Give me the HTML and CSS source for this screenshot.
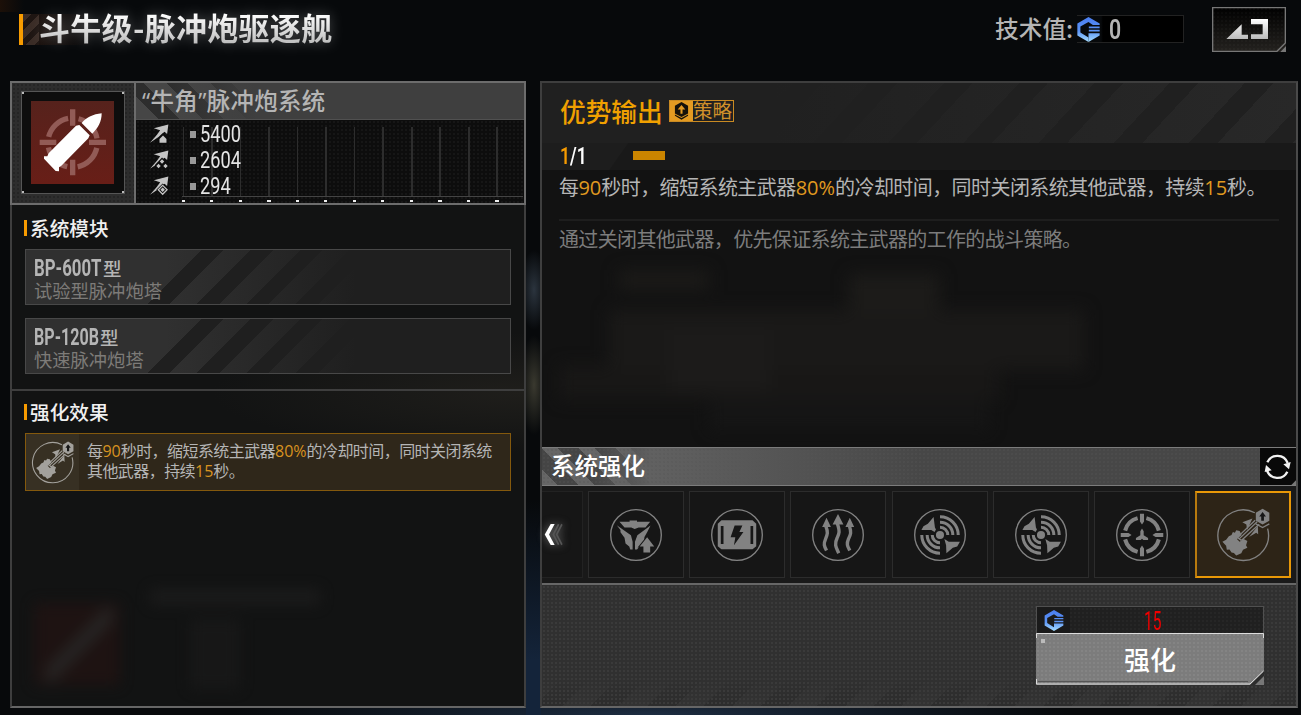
FILE: index.html
```
<!DOCTYPE html>
<html lang="zh-CN">
<head>
  <meta charset="UTF-8" />
  <meta name="viewport" content="width=device-width, initial-scale=1" />
  <title>斗牛级-脉冲炮驱逐舰</title>
  <link rel="stylesheet" href="styles.css">
</head>
<body>
  <!-- Shared icons -->
  <svg class="defs" aria-hidden="true">
    <defs>
      <linearGradient id="blue" x1="0" y1="0" x2="0" y2="74" gradientUnits="userSpaceOnUse">
        <stop offset="0" stop-color="#4a7df0" />
        <stop offset="0.55" stop-color="#5b93f4" />
        <stop offset="1" stop-color="#a5dcff" />
      </linearGradient>
      <linearGradient id="silver" x1="0" y1="0" x2="0" y2="1">
        <stop offset="0" stop-color="#fff" />
        <stop offset="1" stop-color="#bbb" />
      </linearGradient>
      <symbol id="tech" viewBox="0 0 66 74">
        <path fill="url(#blue)" d="M33 0 L66 19 V24 H46 L33 15 L9 28 V46 L33 61 V74 L0 55 V19Z" />
        <path fill="url(#blue)" d="M34 28 H66 V33 H34Z M34 38 H66 V43 H34Z M33 48 H66 V55 L33 74Z" />
      </symbol>
      <symbol id="radar" viewBox="-80 -80 160 160">
        <circle class="ring" r="75" />
        <circle r="12" />
        <path class="arc" d="M0-54A54 54 0 0 1 54 0M0-38A38 38 0 0 1 38 0M0-23A23 23 0 0 1 23 0M0 54A54 54 0 0 1-54 0M0 38A38 38 0 0 1-38 0M0 23A23 23 0 0 1-23 0" />
        <path d="M-19-53 L-15-22 -12-16 -16-9 -26-15 H-55 L-49-26 -36-33Z M13 12 L26 20 H59 L51 34 38 38 19 54 18 30Z" />
      </symbol>
      <symbol id="cannon" viewBox="-80 -80 160 160">
        <path class="ring" d="M35-66A75 75 0 1 0 73-19" />
        <path d="M-61 20 L-50 14 -42 4 -34 0 -30-9 -24-7 -20-14 -10-12 -4 0 -18 12 -10 20 2 12 13 18 9 30 13 38 0 44 -5 54 -20 61 -27 53 -34 52 -40 43 -48 44 -50 32Z" />
        <path class="thin" d="M-17 7 L36-44 M-5 16 L48-32 M-17 7 L-5 16 M-10 10 L42-39" />
        <path d="M-2-38 L28-49 12-15 10-31Z M44-27 L45-2 39-7 18 6Z" />
        <path d="M58-78 L78-66 V-42 L58-31 38-42 V-66Z" />
        <path class="hole" d="M58-68 L68-55 H62 V-42 H54 V-55 H48Z" />
        <path class="thin" d="M38-33 L58-22 78-33" />
      </symbol>
    </defs>
  </svg>

  <header class="topbar">
    <h1 class="title"><span>斗牛级-脉冲炮驱逐舰</span></h1>
    <div class="tech">
      <span class="tech-label">技术值:</span>
      <div class="tech-box">
        <svg class="tech-icon"><use href="#tech" /></svg>
        <span class="narrow tech-value">0</span>
      </div>
    </div>
    <button class="back" aria-label="返回">
      <svg viewBox="0 0 222 135">
        <path class="frame" d="M2 2 H220 V108 L195 133 H2Z" />
        <path class="corner" d="M222 117 V135 H205Z" />
        <path fill="url(#silver)" d="M43 96 L89 52 V83 H108 V96Z M117 36 H168 V96 H117 V82 H152 V52 H117Z" />
      </svg>
    </button>
  </header>

  <main class="panels">
    <section class="panel left">
      <div class="system">
        <div class="system-icon">
          <div class="system-frame">
            <svg viewBox="0 0 249 249">
              <g class="sight">
                <circle cx="125" cy="125" r="74" stroke-dasharray="84 32.24" stroke-dashoffset="-16" />
                <path d="M125 25 V74 M125 176 V223 M26 124 H76 M174 124 H225" />
              </g>
              <path fill="#fff" d="M212 37 C212 62 202 80 184 98 L152 66 C168 48 186 40 212 37Z M145 72 L176 103 L172 112 L91 194 L84 199 V211 L74 210 L39 173 V166 H49 L53 157 L135 74Z" />
            </svg>
          </div>
        </div>
        <div class="system-info">
          <h2 class="system-name">“牛角”脉冲炮系统</h2>
          <div class="stats">
            <div class="stat">
              <svg viewBox="0 0 60 60"><path d="M58 0 L54 30 46 23 38 29 28 39 0 58 22 32 32 18 12 12Z" /><path class="cut" d="M24 60 V45 L41 28 58 45 V60Z" /><path d="M30 46 L41 35 52 46 V58 H30Z" /></svg>
              <i></i><span class="narrow">5400</span>
            </div>
            <div class="stat">
              <svg viewBox="0 0 60 60"><path d="M58 0 L54 30 46 23 38 29 28 39 0 58 22 32 32 18 12 12Z" /><path class="cut" d="M16 60 V45 L38 22 60 45 V60Z" /><path d="M38 28 l7 7 -7 7 -7-7z M27 42 l7 7 -7 7 -7-7z M49 42 l7 7 -7 7 -7-7z" /></svg>
              <i></i><span class="narrow">2604</span>
            </div>
            <div class="stat">
              <svg viewBox="0 0 60 60"><path d="M58 0 L54 30 46 23 38 29 28 39 0 58 22 32 32 18 12 12Z" /><path class="cut" d="M40 22 L60 42 40 62 20 42Z" /><path class="diamond" d="M40 28 L54 42 40 56 26 42Z" /><path d="M40 35 l7 7 -7 7 -7-7z" /></svg>
              <i></i><span class="narrow">294</span>
            </div>
          </div>
        </div>
      </div>

      <div class="block modules">
        <h3>系统模块</h3>
        <div class="module">
          <p class="module-name"><span class="narrow">BP-600T</span>型</p>
          <p class="module-type">试验型脉冲炮塔</p>
        </div>
        <div class="module">
          <p class="module-name m120"><span class="narrow">BP-120B</span>型</p>
          <p class="module-type">快速脉冲炮塔</p>
        </div>
      </div>

      <div class="block effects">
        <h3>强化效果</h3>
        <div class="effect">
          <div class="effect-icon"><svg><use href="#cannon" /></svg></div>
          <p>每<em>90</em>秒时，缩短系统主武器<em>80%</em>的冷却时间，同时关闭系统<br>其他武器，持续<em>15</em>秒。</p>
        </div>
      </div>
      <div class="ghost" aria-hidden="true"></div>
    </section>

    <section class="panel right">
      <div class="detail-head">
        <h2>优势输出</h2>
        <div class="tag">
          <svg viewBox="0 0 40 52"><path d="M20 0 L39 11 V33 L20 43 1 33 V11Z M1 36 L20 46 39 36 V40 L20 51 1 40Z" /><path class="tag-arrow" d="M20 9 L31 22 H23 V34 H17 V22 H9Z" /></svg>
          <span>策略</span>
        </div>
      </div>
      <div class="level">
        <span class="narrow"><b>1</b>/1</span>
        <div class="level-bar"></div>
      </div>
      <div class="detail">
        <p class="detail-text">每<em>90</em>秒时，缩短系统主武器<em>80%</em>的冷却时间，同时关闭系统其他武器，持续<em>15</em>秒。</p>
        <p class="detail-note">通过关闭其他武器，优先保证系统主武器的工作的战斗策略。</p>
        <div class="ship" aria-hidden="true"></div>
      </div>

      <div class="boost-head">
        <h2>系统强化</h2>
        <button class="refresh" aria-label="刷新">
          <svg viewBox="0 0 108 108">
            <path class="loop" d="M22 40 A33 33 0 0 1 83 42 M82 68 A33 33 0 0 1 21 64" />
            <path d="M70 46 L92 39 87 61Z M14 69 L18 48 35 64Z" />
            <path class="corner" d="M108 94 V108 H94Z" />
          </svg>
        </button>
      </div>

      <div class="slots">
        <div class="slot first">
          <svg viewBox="0 0 72 130"><path class="fade" d="M50 34 L34 65 50 96 M60 34 L44 65 60 96" /><path d="M26 33 H38 L21 65 38 97 H26 L8 65Z" /></svg>
        </div>
        <div class="slot">
          <svg viewBox="-80 -80 160 160">
            <circle class="ring" r="75" />
            <path d="M-49-39 H-19 V-43 H3 V-39 H42 L28-22 H8 L-4-18 -14-22 H-34Z M-57-29 L-15 1 -10 20 V43 H-17 L-20 34 -31 25 -34 8 -46-8 V-15Z M43-28 L4 1 -3 20 V43 H3 L15 28 24 18 25 6 33-8Z" />
            <path class="outlined" d="M33 7 L54 34 H42 V52 H22 V34 H11Z" />
          </svg>
        </div>
        <div class="slot">
          <svg viewBox="-80 -80 160 160">
            <circle class="ring" r="75" />
            <path d="M-46-44 H46 L57-33 V33 L46 42 H-46 L-57 33 V-33Z" />
            <path class="hole" d="M-48-27 H-40 V27 H-48Z M40-27 H48 V27 H40Z M-7-28 H16 L7-9 H19 L-9 30 -5 7 H-19Z" />
          </svg>
        </div>
        <div class="slot">
          <svg viewBox="-80 -80 160 160">
            <circle class="ring" r="75" />
            <path d="M0-62 L16-31 H-16Z M-34-51 L-21-24 H-47Z M35-51 L48-24 H22Z" />
            <path class="wave" d="M-2-34 C6-10 4-5-3 10 C-12 28-5 38 2 54 M-36-26 C-29-8-31-2-37 12 C-44 28-40 34-34 46 M34-26 C40-8 38-2 31 12 C24 28 29 34 35 46" />
          </svg>
        </div>
        <div class="slot"><svg><use href="#radar" /></svg></div>
        <div class="slot"><svg><use href="#radar" /></svg></div>
        <div class="slot">
          <svg viewBox="-80 -80 160 160">
            <circle class="ring" r="75" />
            <path class="segment" d="M13-50A52 52 0 0 1 50-13M50 13A52 52 0 0 1 13 50M-13 50A52 52 0 0 1-50 13M-50-13A52 52 0 0 1-13-50" />
            <path d="M-6-63 H6 V-40 L0-31 -6-40Z M-6 63 H6 V40 L0 31 -6 40Z M-63-6 V6 H-40 L-31 0 -40-6Z M63-6 V6 H40 L31 0 40-6Z" />
            <path d="M0-19 L5-11 V1 L18 9 V15 H4 L0 11 -4 15 H-18 V9 L-5 1 V-11Z" />
          </svg>
        </div>
        <div class="slot active"><svg><use href="#cannon" /></svg></div>
      </div>

      <div class="footer">
        <div class="upgrade">
          <div class="price">
            <svg><use href="#tech" /></svg>
            <span class="narrow">15</span>
          </div>
          <button class="upgrade-btn">
            <svg viewBox="0 0 228 52" aria-hidden="true">
              <path class="notch" d="M214 52 L228 38 V52Z" />
              <path class="edge" d="M0.5 5 V0.5 H227.5 V5 M0.5 46 V51 H214 L227.5 38" />
              <path class="dash" d="M2 48.5 H212" />
              <path class="corner" d="M228 43 V52 H219Z" />
              <path class="pin" d="M5 6 h4 v4 h-4z" />
            </svg>
            <span>强化</span>
          </button>
        </div>
      </div>
    </section>
  </main>
</body>
</html>
```
FILE: styles.css
```
* {
  box-sizing: border-box;
}

body {
  margin: 0;
  width: 1301px;
  height: 715px;
  overflow: hidden;
  background:
    radial-gradient(ellipse 14px 50px at 534px 385px, #3a392f, transparent),
    radial-gradient(ellipse 14px 40px at 534px 290px, #2b343e, transparent),
    linear-gradient(#0000 500px, #14243a 660px) 526px 0 / 15px 100% no-repeat,
    radial-gradient(ellipse 420px 30px at 650px 715px, #1d2d42, transparent),
    #07090b;
  color: #b5b5b5;
  font-family: "Open Sans", "Noto Sans CJK SC", sans-serif;
}

h1, h2, h3, p {
  margin: 0;
  font-weight: 500;
}

p {
  font-weight: 400;
}

h1, h2, h3, button, .tech-label {
  font-family: "Noto Sans CJK SC", sans-serif;
}

button {
  padding: 0;
  border: 0;
  background: none;
}

svg {
  display: block;
  fill: currentColor;
}

em {
  font-style: normal;
  letter-spacing: 0;
  color: #e09a20;
}

.defs {
  position: absolute;
  width: 0;
  height: 0;
}

/* Squeezed digits */
.narrow {
  display: inline-block;
  font-family: Roboto, sans-serif;
  transform: scaleX(0.76);
  transform-origin: left center;
}

/* Icon strokes */
.ring, .arc, .thin, .wave, .segment, .loop, .frame, .edge, .dash, .diamond, .fade {
  fill: none;
  stroke: currentColor;
}
.ring { stroke-width: 4; }
.arc { stroke-width: 9; }
.thin { stroke-width: 4; }
.wave { stroke-width: 10; }
.segment { stroke-width: 12; }
.hole { fill: #171717; }
.corner { fill: #777; }
.outlined {
  stroke: #161616;
  stroke-width: 6;
  paint-order: stroke;
}

/* Top bar */
.topbar {
  display: flex;
  align-items: flex-start;
  height: 81px;
  padding: 7px 15px 0 19px;
  background: linear-gradient(90deg, #1c1008, transparent) 0 0 / 24px 12px no-repeat;
}

.title {
  flex: 1;
  display: flex;
  align-items: center;
  height: 31px;
  margin-top: 7px;
  padding-left: 16px;
  border-left: 4px solid #f79b00;
  background:
    repeating-linear-gradient(135deg, #3a2c26 0 6px, #1e1512 6px 12px) 0 0 / 16px 100% no-repeat,
    linear-gradient(90deg, #1e120d, transparent) 0 0 / 70px 100% no-repeat;
  font-size: 31px;
  font-weight: 700;
  letter-spacing: 0.3px;
  line-height: 31px;
}
.title span {
  margin-top: -5px;
  background: linear-gradient(#fff 20%, #bbb 90%);
  background-clip: text;
  color: transparent;
  line-height: 44px;
  filter: drop-shadow(0 0 7px rgba(255, 255, 255, 0.3));
}

.tech {
  display: flex;
  align-items: center;
  height: 44px;
  margin-right: 28px;
}
.tech-label {
  width: 82px;
  margin-top: -3px;
  font-size: 23.7px;
  font-weight: 500;
  white-space: nowrap;
}
.tech-box {
  display: flex;
  align-items: center;
  width: 107px;
  height: 28px;
  border: 1px solid #222;
  border-left: 0;
  background: linear-gradient(90deg, #07090b 24px, #000 26px);
}
.tech-icon {
  width: 23px;
  height: 25px;
}
.tech-value {
  margin: 2px 0 0 9px;
  font-size: 28px;
  font-weight: 600;
  line-height: 28px;
}
.back {
  width: 74px;
  height: 45px;
  background:
    radial-gradient(#ffffff06 1px, transparent 1px) 0 0 / 4px 4px,
    linear-gradient(#000, #24221f);
}
.back svg {
  width: 74px;
  height: 45px;
}
.frame {
  stroke: #777;
  stroke-width: 4;
}

/* Panels */
.panels {
  display: flex;
  gap: 14px;
  height: 627px;
  padding: 0 3px 0 10px;
}
.panel {
  display: flex;
  flex-direction: column;
  border: 2px solid #3e3e3e;
  border-bottom-color: #666;
}

.left {
  width: 516px;
  background:
    radial-gradient(ellipse 310px 60px at 510px 310px, #1f1e1b, transparent),
    #121313;
}
.system {
  display: flex;
  height: 124px;
  margin: -2px -2px 0;
  border: 2px solid #6c6c6c;
}
.system-icon {
  display: flex;
  align-items: center;
  justify-content: center;
  width: 124px;
  border-right: 2px solid #6c6c6c;
  background:
    linear-gradient(#f79b00, #f79b00) 9px 53px / 3px 15px no-repeat,
    radial-gradient(#252525 1px, transparent 1.2px) 0 0 / 4px 4px,
    #2d2d2d;
}
.system-frame {
  width: 104px;
  height: 103px;
  margin: -1px 0 0 -1px;
  padding: 9px;
  border: 1px solid #555;
  background:
    linear-gradient(#bbb, #bbb) 0 0 / 2px 2px no-repeat,
    linear-gradient(#bbb, #bbb) 100% 0 / 2px 2px no-repeat,
    linear-gradient(#bbb, #bbb) 0 100% / 2px 2px no-repeat,
    linear-gradient(#bbb, #bbb) 100% 100% / 2px 2px no-repeat,
    #0d0d0d;
}
.system-frame svg {
  width: 83px;
  height: 83px;
  background: linear-gradient(#56221c, #681e17);
}
.sight {
  fill: none;
  stroke: #925b56;
  stroke-width: 16;
}
.system-info {
  flex: 1;
}
.system-name {
  height: 37px;
  padding-left: 6px;
  border-bottom: 1px solid #505050;
  background:
    linear-gradient(90deg, transparent 30px, #3f3f3f 120px),
    repeating-linear-gradient(45deg, #464646 0 16px, #2d2d2d 16px 31px);
  font-family: "Open Sans", "Noto Sans CJK SC", sans-serif;
  font-size: 23.4px;
  letter-spacing: 0.4px;
  line-height: 36px;
}
.stats {
  height: 83px;
  padding-top: 1px;
  background:
    repeating-linear-gradient(90deg, #eee 0 3px, transparent 3px 28.5px) 46px 80px / 343px 2px no-repeat,
    linear-gradient(#444, #444) 46px 76px / 341px 1px no-repeat,
    repeating-linear-gradient(90deg, #2d2d2d 0 1.5px, transparent 1.5px 28.5px) 47px 7px / 323px 69px no-repeat,
    radial-gradient(#161616 1px, transparent 1.2px) 0 0 / 4px 4px,
    #0d0d0d;
}
.stat {
  display: flex;
  align-items: center;
  height: 26px;
  padding-left: 14px;
  color: #e4e4e4;
  font-size: 24px;
  font-weight: 400;
  line-height: 26px;
}
.stat svg {
  width: 19px;
  height: 20px;
  color: #c4c4c4;
}
.cut { fill: #0c0c0c; }
.diamond { stroke-width: 4; }
.stat i {
  width: 6px;
  height: 7px;
  margin: 0 4px 0 21px;
  background: #999;
}

.block h3 {
  padding-left: 3px;
  border-left: 3px solid #f79b00;
  color: #f0f0f0;
  font-size: 19.7px;
  line-height: 16px;
}
.modules {
  height: 186px;
  padding: 15px 13px 0 12px;
  border-bottom: 2px solid #3e3e3e;
}
.module {
  height: 56px;
  margin: 13px 0 0 1px;
  padding: 5px 8px;
  border: 1px solid #484848;
  background:
    linear-gradient(90deg, transparent 140px, #1f1f1f 330px),
    linear-gradient(135deg, #303030 124px, transparent 0),
    repeating-linear-gradient(135deg, #303030 0 19px, #1f1f1f 19px 35px);
}
.modules h3 {
  margin-bottom: 13px;
}
.module-name {
  height: 26px;
  font-size: 18.5px;
  font-weight: 500;
  line-height: 26px;
  white-space: nowrap;
}
.module-name .narrow {
  width: 69px;
  font-size: 24px;
  font-weight: 700;
  line-height: 26px;
  transform: scaleX(0.7);
}
.m120 .narrow {
  width: 66px;
  transform: scaleX(0.67);
}
.module-type {
  color: #7d7b78;
  font-size: 18.3px;
  line-height: 19px;
}

.effects {
  padding: 13px 13px 0 12px;
}
.effect {
  display: flex;
  height: 58px;
  margin: 13px 0 0 1px;
  border: 1px solid #84590d;
  background: #2f271a;
}
.effect-icon {
  display: flex;
  align-items: center;
  justify-content: center;
  width: 53px;
  background: #373023;
  color: #a3a19c;
}
.effect-icon svg {
  width: 43px;
  height: 43px;
}
.effect p {
  padding: 7px 0 0 8px;
  font-size: 16px;
  letter-spacing: -0.57px;
  line-height: 20px;
  white-space: nowrap;
}
.effect em {
  color: #d99320;
}

.ghost {
  width: 480px;
  height: 100px;
  margin: 98px 0 0 18px;
  background:
    linear-gradient(135deg, transparent 40%, #2c2a29 46% 54%, transparent 60%) 16px 18px / 66px 76px no-repeat,
    linear-gradient(#211312, #211312) 4px 14px / 86px 82px no-repeat,
    linear-gradient(#1d1d1d, #1d1d1d) 120px 0 / 170px 16px no-repeat,
    linear-gradient(#191919, #191919) 160px 30px / 50px 70px no-repeat;
  opacity: 0.8;
  filter: blur(7px);
}

/* Right panel */
.right {
  width: 758px;
  background: #121212;
  border-right-color: #4a4a4a;
}
.detail-head {
  display: flex;
  align-items: flex-start;
  height: 60px;
  padding: 8px 18px 0;
  background:
    linear-gradient(90deg, #202020 230px, transparent),
    repeating-linear-gradient(133deg, #282828 0 19px, #202020 19px 40px, #282828 40px 55px);
}
.detail-head h2 {
  width: 109px;
  color: #f0a000;
  font-size: 25.7px;
  line-height: 40px;
  white-space: nowrap;
}
.tag {
  display: flex;
  width: 65px;
  height: 22px;
  margin-top: 9px;
  border: 1px solid #c98a22;
  color: #d0902a;
}
.tag svg {
  width: 23px;
  height: 20px;
  padding: 1px 4px;
  background: #e39a22;
  fill: #16110a;
}
.tag .tag-arrow { fill: #e39a22; }
.tag span {
  font-size: 19.5px;
  line-height: 19px;
}
.level {
  display: flex;
  align-items: center;
  height: 27px;
  padding-left: 18px;
  background: linear-gradient(125deg, #1d1d1d 70px, #191919 71px);
  color: #fff;
  font-size: 23px;
  font-weight: 600;
}
.level .narrow {
  width: 73px;
}
.level b {
  color: #f79b00;
  font-weight: 600;
}
.level-bar {
  width: 32px;
  height: 9px;
  margin-top: -2px;
  background: #cb8500;
}
.detail {
  height: 277px;
  padding: 4px 17px 0;
  font-size: 20px;
  letter-spacing: -0.57px;
  line-height: 28px;
  white-space: nowrap;
}
.detail-text {
  height: 47px;
  border-bottom: 2px solid #1e1e1e;
}
.detail-note {
  padding-top: 5px;
  color: #7c7c7c;
  letter-spacing: -0.65px;
}
/* Blurred hull showing through the panel */
.ship {
  height: 170px;
  margin-top: 16px;
  background:
    linear-gradient(#1b1a18, #1b1a18) 60px 0 / 90px 20px no-repeat,
    linear-gradient(#1c1b19, #1c1b19) 290px 4px / 90px 40px no-repeat,
    linear-gradient(#1c1b1a, #1c1b1a) 110px 60px / 100px 60px no-repeat,
    linear-gradient(#1a1918, #1a1918) 50px 40px / 475px 60px no-repeat,
    linear-gradient(#181716, #181716) 0 95px / 440px 35px no-repeat,
    linear-gradient(#151515, #151515) 150px 130px / 280px 30px no-repeat;
  filter: blur(8px);
}

.boost-head {
  display: flex;
  justify-content: space-between;
  height: 39px;
  border: solid #7c7c7c;
  border-width: 1px 0;
  background:
    radial-gradient(#5555 1px, transparent 1.2px) 0 0 / 4px 4px,
    linear-gradient(90deg, transparent 50px, #616161 110px, #474747 380px),
    repeating-linear-gradient(45deg, #666 0 11px, #454545 11px 26px);
}
.boost-head h2 {
  padding-left: 9px;
  color: #fff;
  font-size: 23.5px;
  line-height: 35px;
}
.refresh {
  width: 36px;
  background: #090909;
  color: #f2f2f2;
}
.refresh svg {
  width: 36px;
  height: 36px;
}
.loop { stroke-width: 7; }

.slots {
  display: flex;
  justify-content: space-between;
  height: 97px;
  padding: 5px 5px 6px 0;
  background: #191919;
}
.slot {
  display: flex;
  align-items: center;
  justify-content: center;
  width: 96px;
  height: 87px;
  border: 1px solid #2c2c2c;
  background: #161616;
  color: #828282;
}
.slot svg {
  width: 54px;
  height: 54px;
}
.first {
  justify-content: flex-start;
  width: 41px;
  border-color: #222;
  border-left: 0;
  color: #fff;
}
.first svg {
  width: 24px;
  height: 43px;
  filter: drop-shadow(0 0 4px #777);
}
.fade {
  stroke: #555;
  stroke-width: 5;
}
.active {
  border: 2px solid #e99807;
  border-left-color: #b87a0e;
  background: #2d2417;
}

.footer {
  flex: 1;
  display: flex;
  justify-content: flex-end;
  padding: 21px 32px 0;
  border-top: 2px solid #666;
  background:
    radial-gradient(#3a3a3a 1px, transparent 1.2px) 0 0 / 4px 4px,
    linear-gradient(#303030 78%, #3030307a),
    repeating-linear-gradient(135deg, #292929 0 20px, #353535 20px 40px);
}
.upgrade {
  width: 228px;
}
.price {
  display: flex;
  height: 27px;
  border: 1px solid #505050;
  border-bottom: 0;
  background:
    linear-gradient(90deg, #1a1a1a 33px, transparent 33px),
    radial-gradient(#262626 1px, transparent 1.2px) 0 0 / 4px 4px,
    #202020;
}
.price svg {
  width: 20px;
  height: 21px;
  margin: 3px 80px 0 7px;
}
.price span {
  color: #f00000;
  font-size: 26px;
  line-height: 29px;
  transform: scaleX(0.6);
}
.upgrade-btn {
  display: grid;
  width: 228px;
  height: 52px;
}
.upgrade-btn svg,
.upgrade-btn span {
  grid-area: 1 / 1;
  width: 228px;
  height: 52px;
}
.upgrade-btn svg {
  background:
    radial-gradient(#848484 1px, transparent 1.2px) 0 0 / 4px 4px,
    #7c7c7c;
}
.upgrade-btn .edge {
  stroke: #ddd;
}
.upgrade-btn .dash {
  stroke: #555;
}
.upgrade-btn .pin {
  fill: #bbb;
}
.upgrade-btn .notch {
  fill: #2c2c2c;
}
.upgrade-btn span {
  color: #fff;
  font-size: 26px;
  font-weight: 500;
  line-height: 52px;
}
```
